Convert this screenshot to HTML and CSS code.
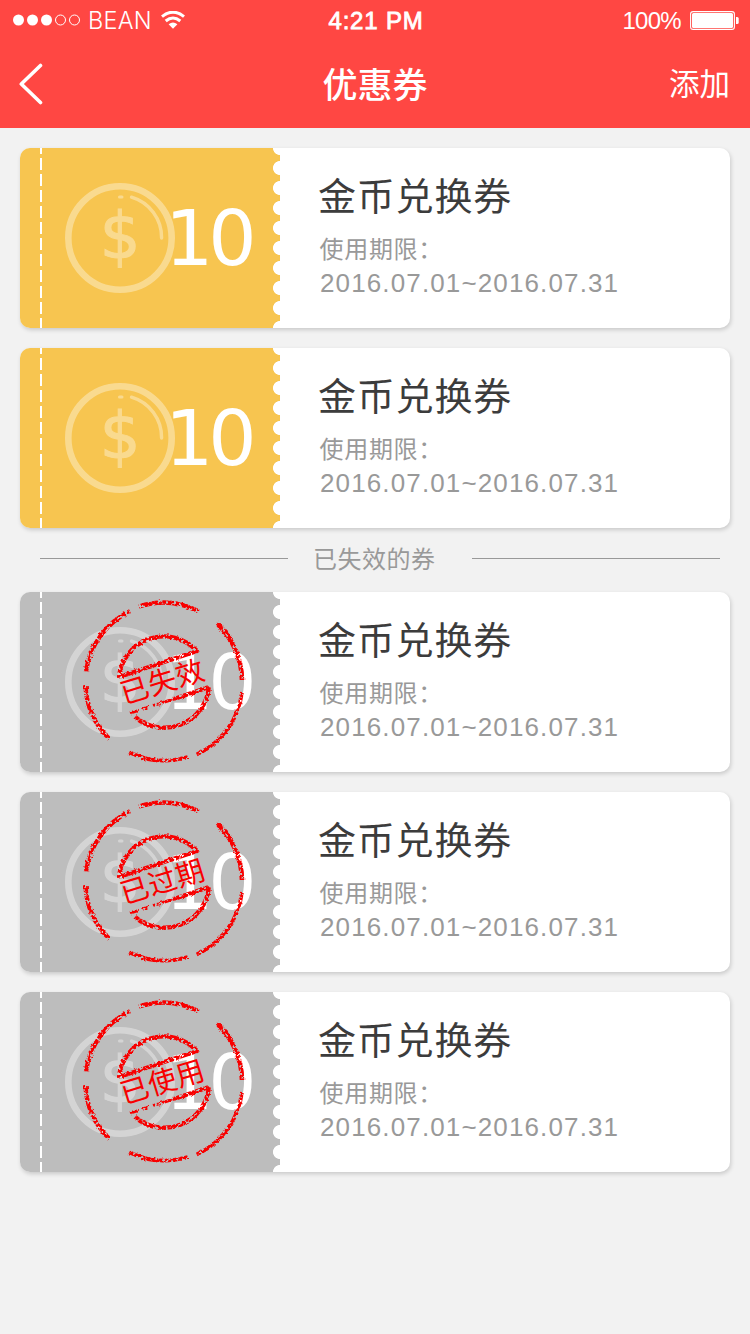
FILE: index.html
```html
<!DOCTYPE html>
<html lang="zh-CN">
<head>
<meta charset="utf-8">
<title>优惠券</title>
<link rel="stylesheet" href="styles.css">
</head>
<body>
<svg class="defs" width="0" height="0" aria-hidden="true">
  <defs>
    <filter id="ink" x="0" y="0" width="260" height="180" filterUnits="userSpaceOnUse" color-interpolation-filters="sRGB">
      <feTurbulence type="fractalNoise" baseFrequency="0.37" numOctaves="2" seed="11" result="n"/>
      <feDisplacementMap in="SourceGraphic" in2="n" scale="3" xChannelSelector="R" yChannelSelector="G" result="d"/>
      <feColorMatrix in="n" type="matrix" values="0 0 0 0 0  0 0 0 0 0  0 0 0 0 0  0 0 8 0 -2.700" result="m"/>
      <feComposite in="d" in2="m" operator="in"/>
    </filter>
    <symbol id="coin" viewBox="0 0 110 110">
      <g fill="none" stroke="#fff" stroke-linecap="round">
        <circle cx="55" cy="55" r="51.7" stroke-width="6.6"/>
        <path d="M66.500 14.200A42 42 0 0 1 96.600 55" stroke-width="3.4"/>
        <path d="M54.500 14H57" stroke-width="3"/>
      </g>
      <text class="coin-sign" x="55" y="75" text-anchor="middle">$</text>
    </symbol>
    <symbol id="stamp" viewBox="0 0 260 180">
      <g filter="url(#ink)">
        <g transform="translate(144 90)" fill="none" stroke="#f80000" stroke-width="4.400">
          <path d="M-25-75.500A79 79 0 0 1 34-71M-54.700 56.800A79 79 0 0 1-78.500 3M-78-10.800A79 79 0 0 1-34-70.800"/>
          <path d="M78 10A79 79 0 0 1 32.700 72.500M23.700 75A79 79 0 0 1-34.700 70.200" stroke-width="3.800"/>
          <path d="M53-58.500A79 79 0 0 1 78 -2" stroke-width="4.600"/>
          <path d="M-45-4A45 45 0 0 1 33-31L-45-5M45 5A45 45 0 0 1-29 35M45 5L10 17"/>
          <path d="M10 17L-34 31" stroke-width="3" stroke-dasharray="22 5 6 4"/>
        </g>
      </g>
    </symbol>
  </defs>
</svg>

<header class="header">
  <div class="status">
    <div class="status-left">
      <svg class="signal" width="68" height="12" viewBox="0 0 68 12">
        <g fill="#fff"><circle cx="5.500" cy="6" r="5.500"/><circle cx="19.500" cy="6" r="5.500"/><circle cx="33.500" cy="6" r="5.500"/></g>
        <g fill="none" stroke="#fff"><circle cx="47.500" cy="6" r="5"/><circle cx="61.500" cy="6" r="5"/></g>
      </svg>
      <span class="carrier">BEAN</span>
      <svg class="wifi" width="24" height="18" viewBox="0 0 24 18">
        <g fill="none" stroke="#fff" stroke-width="3.100"><path d="M1 5.600Q12-3.200 23 5.600"/><path d="M4.700 10Q12 4 19.300 10"/></g>
        <path d="M7.600 13.200Q12 9.800 16.400 13.200L12 17.700Z" fill="#fff"/>
      </svg>
    </div>
    <span class="clock">4:21 PM</span>
    <div class="status-right">
      <span class="percent">100%</span>
      <svg class="battery" width="49" height="19" viewBox="0 0 49 19">
        <rect x=".6" y=".6" width="43.800" height="17.800" rx="2.500" fill="none" stroke="#fff" stroke-width="1.100"/>
        <rect x="2" y="2" width="41" height="15" rx="1.500" fill="#fff"/>
        <path d="M46 6h1.200a1.500 1.500 0 0 1 1.500 1.500v4a1.500 1.500 0 0 1-1.500 1.500H46z" fill="#fff"/>
      </svg>
    </div>
  </div>
  <nav class="nav">
    <svg class="back" width="24" height="42" viewBox="0 0 24 42"><path d="M21.500 2.500L2.300 21L21.500 39.500" fill="none" stroke="#fff" stroke-width="3.600" stroke-linecap="round" stroke-linejoin="round"/></svg>
    <h1 class="title">优惠券</h1>
    <span class="add">添加</span>
  </nav>
</header>

<main class="list">
  <article class="coupon">
    <div class="stub"><svg class="coin"><use href="#coin"/></svg><span class="amount">10</span></div>
    <div class="info"><h2 class="name">金币兑换券</h2><p class="label">使用期限：</p><p class="dates">2016.07.01~2016.07.31</p></div>
  </article>
  <article class="coupon">
    <div class="stub"><svg class="coin"><use href="#coin"/></svg><span class="amount">10</span></div>
    <div class="info"><h2 class="name">金币兑换券</h2><p class="label">使用期限：</p><p class="dates">2016.07.01~2016.07.31</p></div>
  </article>

  <div class="divider"><span class="divider-text">已失效的券</span></div>

  <article class="coupon invalid">
    <div class="stub"><svg class="coin"><use href="#coin"/></svg><span class="amount">10</span>
      <svg class="stamp" viewBox="0 0 260 180"><use href="#stamp"/><text class="stamp-text" transform="translate(145.500 99.500) rotate(-17)" text-anchor="middle">已失效</text></svg></div>
    <div class="info"><h2 class="name">金币兑换券</h2><p class="label">使用期限：</p><p class="dates">2016.07.01~2016.07.31</p></div>
  </article>
  <article class="coupon invalid">
    <div class="stub"><svg class="coin"><use href="#coin"/></svg><span class="amount">10</span>
      <svg class="stamp" viewBox="0 0 260 180"><use href="#stamp"/><text class="stamp-text" transform="translate(145.500 99.500) rotate(-17)" text-anchor="middle">已过期</text></svg></div>
    <div class="info"><h2 class="name">金币兑换券</h2><p class="label">使用期限：</p><p class="dates">2016.07.01~2016.07.31</p></div>
  </article>
  <article class="coupon invalid">
    <div class="stub"><svg class="coin"><use href="#coin"/></svg><span class="amount">10</span>
      <svg class="stamp" viewBox="0 0 260 180"><use href="#stamp"/><text class="stamp-text" transform="translate(145.500 99.500) rotate(-17)" text-anchor="middle">已使用</text></svg></div>
    <div class="info"><h2 class="name">金币兑换券</h2><p class="label">使用期限：</p><p class="dates">2016.07.01~2016.07.31</p></div>
  </article>
</main>
</body>
</html>
```
FILE: styles.css
```css
* { box-sizing: border-box; }
body, h1, h2, p { margin: 0; font-weight: 400; }
body {
  min-height: 1334px;
  background: #f2f2f2;
  font-family: "Liberation Sans", "Noto Sans CJK SC", sans-serif;
}
svg { display: block; flex: none; }
.defs { position: absolute; }

.header { height: 128px; background: #ff4743; color: #fff; }
.status {
  height: 40px;
  padding: 0 11px 0 13px;
  display: grid;
  grid-template-columns: 1fr auto 1fr;
  align-items: center;
  line-height: 40px;
  white-space: nowrap;
}
.status-left, .status-right { display: flex; align-items: center; }
.status-right { justify-content: flex-end; }
.carrier { margin: 2px 9px 0 7px; font: 300 23.5px/38px "Inter", sans-serif; letter-spacing: .2px; }
.clock { font-size: 24px; letter-spacing: .8px; -webkit-text-stroke: .8px #fff; padding-top: 2px; line-height: 38px; }
.percent { font-size: 24px; letter-spacing: -.7px; margin-right: 9px; padding-top: 2px; line-height: 38px; }

.nav {
  height: 88px;
  padding: 0 20px 0 19px;
  display: grid;
  grid-template-columns: 1fr auto 1fr;
  align-items: center;
  font-family: "Noto Sans CJK SC", sans-serif;
}
.title { padding: 0 0 2px 1px; font-size: 35px; font-weight: 500; line-height: 86px; }
.add { justify-self: end; padding-bottom: 4px; font-size: 30.5px; line-height: 84px; }

.list { padding: 20px; display: flex; flex-direction: column; }
.coupon {
  height: 180px;
  display: flex;
  background: #fff;
  border-radius: 10px;
  box-shadow: 1px 2px 4px rgba(0, 0, 0, .17);
}
.coupon + .coupon { margin-top: 20px; }

.stub {
  position: relative;
  width: 260px;
  display: flex;
  align-items: center;
  padding-left: 45px;
  border-radius: 10px 0 0 10px;
  background:
    radial-gradient(circle at 7px 10px, #fff 6.600px, transparent 7.400px) right 0 top -10px / 7px 20px repeat-y,
    linear-gradient(#fff 12px, transparent 12px) 20px -6px / 2px 16px repeat-y,
    #f7c550;
}
.invalid .stub { background-color: #bdbdbd; }
.coin { width: 110px; height: 110px; opacity: .36; }
.coin-sign { font: 64px "DejaVu Sans", sans-serif; fill: #fff; stroke: #fff; stroke-width: 1px; }
.amount {
  margin-left: -10px;
  padding-top: 2px;
  color: #fff;
  font: 76px/178px "DejaVu Sans", sans-serif;
  letter-spacing: -5px;
}
.stamp { position: absolute; inset: 0; width: 260px; height: 180px; }
.stamp-text { font: 28.500px "Noto Sans CJK SC", sans-serif; letter-spacing: .5px; fill: #f80000; }

.info { padding: 18px 0 0 38px; font-family: "Noto Sans CJK SC", sans-serif; color: #999; }
.name { color: #3c3c3c; font-size: 38px; line-height: 56px; letter-spacing: .8px; }
.label { margin: 9px 0 0 1.500px; font-size: 24px; line-height: 34px; letter-spacing: .7px; }
.dates { margin-left: 2px; padding-top: 1px; font: 26px/34px "Liberation Sans", sans-serif; letter-spacing: 1.130px; }

.divider { height: 64px; padding: 0 20px 4px 20px; display: flex; align-items: center; color: #999; margin-right: -10px; }
.divider::before, .divider::after { content: ""; width: 248px; height: 1px; background: #999; flex: none; }
.divider-text { width: 184px; padding-left: 25px; font: 24px/60px "Noto Sans CJK SC", sans-serif; letter-spacing: .5px; flex: none; }
```
